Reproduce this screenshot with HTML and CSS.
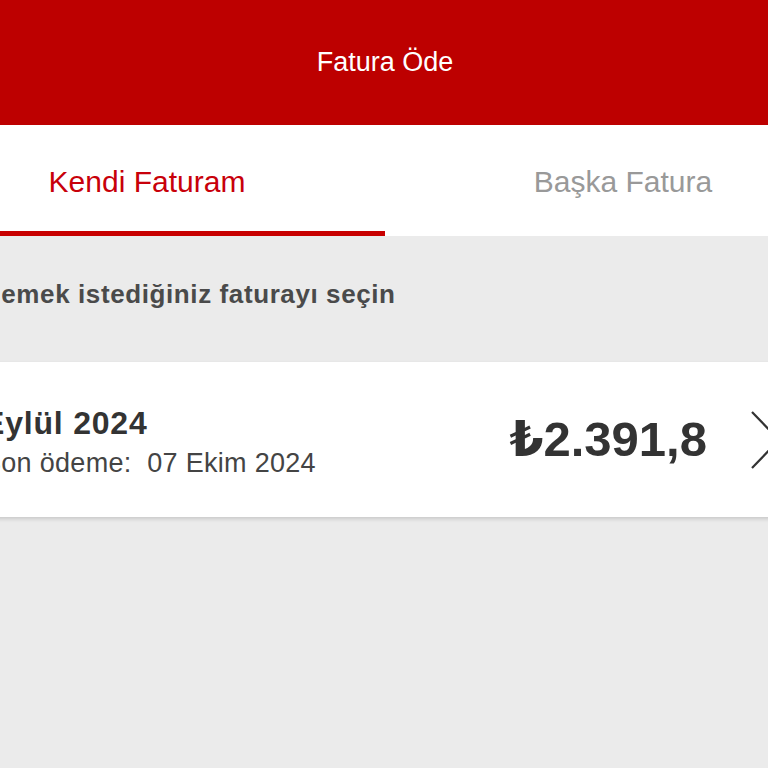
FILE: index.html
```html
<!DOCTYPE html>
<html lang="tr">
<head>
    <meta charset="UTF-8">
    <meta name="viewport" content="width=device-width, initial-scale=1.0">
    <title>Fatura Öde</title>
    <link rel="stylesheet" href="styles.css">
</head>
<body>
    <div class="app">
        <header class="topbar">
            <h1>Fatura Öde</h1>
        </header>

        <nav class="tabs">
            <div class="tab active">Kendi Faturam</div>
            <div class="tab">Başka Fatura</div>
        </nav>

        <h2 class="section-title">Ödemek istediğiniz faturayı seçin</h2>

        <div class="bill-card">
            <div class="bill-info">
                <div class="bill-month">Eylül 2024</div>
                <div class="bill-due">Son ödeme:&nbsp; 07 Ekim 2024</div>
            </div>
            <div class="bill-amount">₺2.391,8</div>
            <svg class="chevron" width="30" height="58" viewBox="0 0 30 58">
                <polyline points="1,1 28,29 1,57" fill="none" stroke="#333" stroke-width="2.2"/>
            </svg>
        </div>
    </div>
</body>
</html>
```

FILE: styles.css
```css
body {
    margin: 0;
    width: 768px;
    height: 768px;
    overflow: hidden;
    background-color: #ebebeb;
    font-family: "Liberation Sans", "DejaVu Sans", sans-serif;
    color: #333;
}
.app {
    width: 952px;
    margin-left: -91px;
}
.topbar {
    height: 125px;
    background-color: #bd0000;
    display: flex;
    align-items: center;
    justify-content: center;
}
.topbar h1 {
    margin: 0;
    color: white;
    font-size: 27px;
    font-weight: normal;
}
.tabs {
    display: flex;
    height: 111px;
    background: white;
}
.tab {
    flex: 1;
    display: flex;
    align-items: center;
    justify-content: center;
    font-size: 30px;
    color: #999;
    box-sizing: border-box;
    padding-top: 8px;
    border-bottom: 5px solid transparent;
}
.tab.active {
    color: #c8000a;
    border-bottom-color: #c80000;
}
.section-title {
    margin: 0;
    height: 126px;
    box-sizing: border-box;
    padding: 43px 0 0 55px;
    font-size: 26px;
    letter-spacing: 0.6px;
    font-weight: bold;
    color: #4a4a4a;
}
.bill-card {
    height: 155px;
    background: white;
    box-shadow: 0 2px 4px rgba(0, 0, 0, 0.15);
    display: flex;
    align-items: center;
    padding: 0 80px 0 74px;
}
.bill-info {
    flex: 1;
    padding-top: 4px;
}
.bill-month {
    font-size: 32px;
    letter-spacing: 0.8px;
    font-weight: bold;
    color: #333;
}
.bill-due {
    margin-top: 6px;
    font-size: 27px;
    letter-spacing: 0.3px;
    color: #444;
}
.bill-amount {
    font-size: 49px;
    font-weight: bold;
    color: #333;
}
.chevron {
    margin-left: 44px;
}
```
